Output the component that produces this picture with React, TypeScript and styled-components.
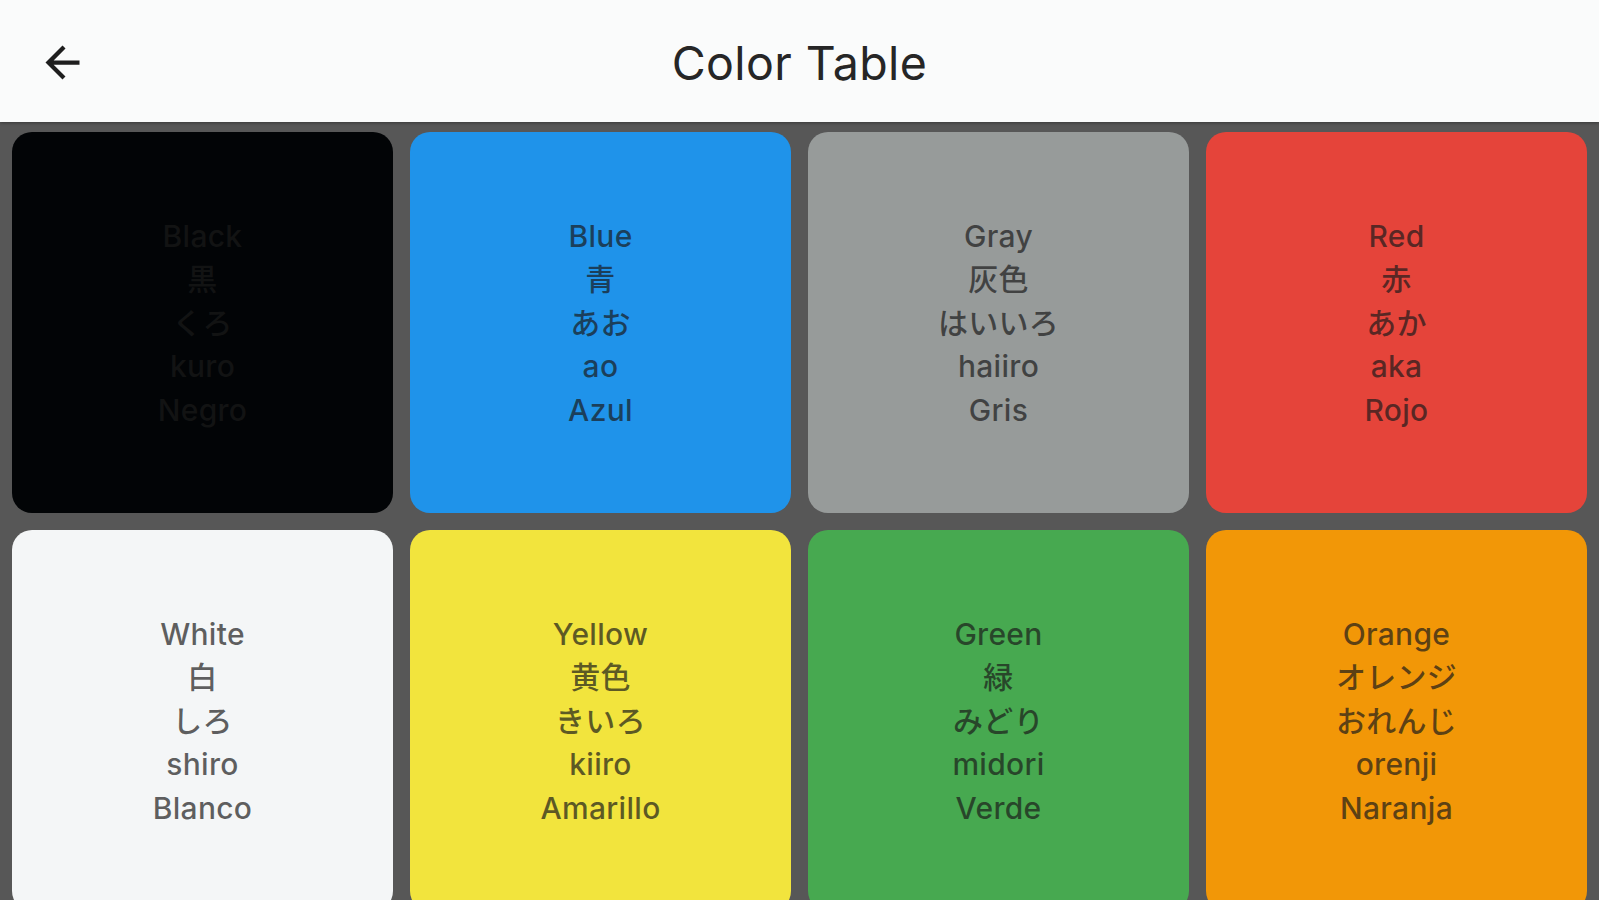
import React from "react";
import styled, { createGlobalStyle } from "styled-components";

const GlobalStyle = createGlobalStyle`
  html, body {
    margin: 0;
    padding: 0;
    height: 100%;
    overflow: hidden;
    background: #575757;
  }
  #root {
    height: 100%;
  }
`;

const Page = styled.div`
  display: flex;
  flex-direction: column;
  height: 100vh;
  background: #575757;
  font-family: Inter, "Noto Sans CJK JP", sans-serif;
  overflow: hidden;
`;

const AppBar = styled.header`
  position: relative;
  z-index: 1;
  flex: 0 0 122px;
  display: flex;
  align-items: center;
  justify-content: center;
  background: #fafbfb;
  box-shadow: 0 1px 3px rgba(0, 0, 0, 0.35);
`;

const BackButton = styled.button`
  position: absolute;
  left: 37px;
  top: 37px;
  width: 51px;
  height: 51px;
  padding: 0;
  border: none;
  background: transparent;
  display: flex;
  align-items: center;
  justify-content: center;
  color: #1e1e1e;
  cursor: pointer;
`;

const Title = styled.h1`
  margin: 0;
  font-family: Inter, sans-serif;
  font-weight: 400;
  font-size: 46.5px;
  letter-spacing: 0.4px;
  color: #262626;
  line-height: 1;
  transform: translateY(2px);
`;

const Grid = styled.main`
  display: grid;
  grid-template-columns: repeat(4, 1fr);
  gap: 17px;
  padding: 10px 12px;
`;

const Tile = styled.div<{ $bg: string }>`
  aspect-ratio: 1 / 1;
  border-radius: 20px;
  background: ${(p) => p.$bg};
  display: flex;
  flex-direction: column;
  align-items: center;
  justify-content: center;
  padding-top: 2px;
  box-sizing: border-box;
`;

const Label = styled.span`
  font-family: Inter, "Noto Sans CJK JP", sans-serif;
  font-size: 30px;
  font-weight: 500;
  line-height: 43.4px;
  color: rgba(26, 26, 26, 0.7);
  letter-spacing: 0.3px;
`;

type ColorEntry = { bg: string; names: string[] };

const colors: ColorEntry[] = [
  { bg: "#020406", names: ["Black", "黒", "くろ", "kuro", "Negro"] },
  { bg: "#1f93ea", names: ["Blue", "青", "あお", "ao", "Azul"] },
  { bg: "#979b9a", names: ["Gray", "灰色", "はいいろ", "haiiro", "Gris"] },
  { bg: "#e5443a", names: ["Red", "赤", "あか", "aka", "Rojo"] },
  { bg: "#f4f6f7", names: ["White", "白", "しろ", "shiro", "Blanco"] },
  { bg: "#f2e43d", names: ["Yellow", "黄色", "きいろ", "kiiro", "Amarillo"] },
  { bg: "#47a950", names: ["Green", "緑", "みどり", "midori", "Verde"] },
  { bg: "#f29707", names: ["Orange", "オレンジ", "おれんじ", "orenji", "Naranja"] },
];

const ArrowBack = () => (
  <svg width="51" height="51" viewBox="0 0 24 24" fill="currentColor" aria-hidden>
    <path d="M20 11H7.83l5.59-5.59L12 4l-8 8 8 8 1.41-1.41L7.83 13H20v-2z" />
  </svg>
);

export default function App() {
  return (
    <Page>
      <GlobalStyle />
      <AppBar>
        <BackButton aria-label="Back">
          <ArrowBack />
        </BackButton>
        <Title>Color Table</Title>
      </AppBar>
      <Grid>
        {colors.map((c) => (
          <Tile key={c.names[0]} $bg={c.bg}>
            {c.names.map((n) => (
              <Label key={n}>{n}</Label>
            ))}
          </Tile>
        ))}
      </Grid>
    </Page>
  );
}
